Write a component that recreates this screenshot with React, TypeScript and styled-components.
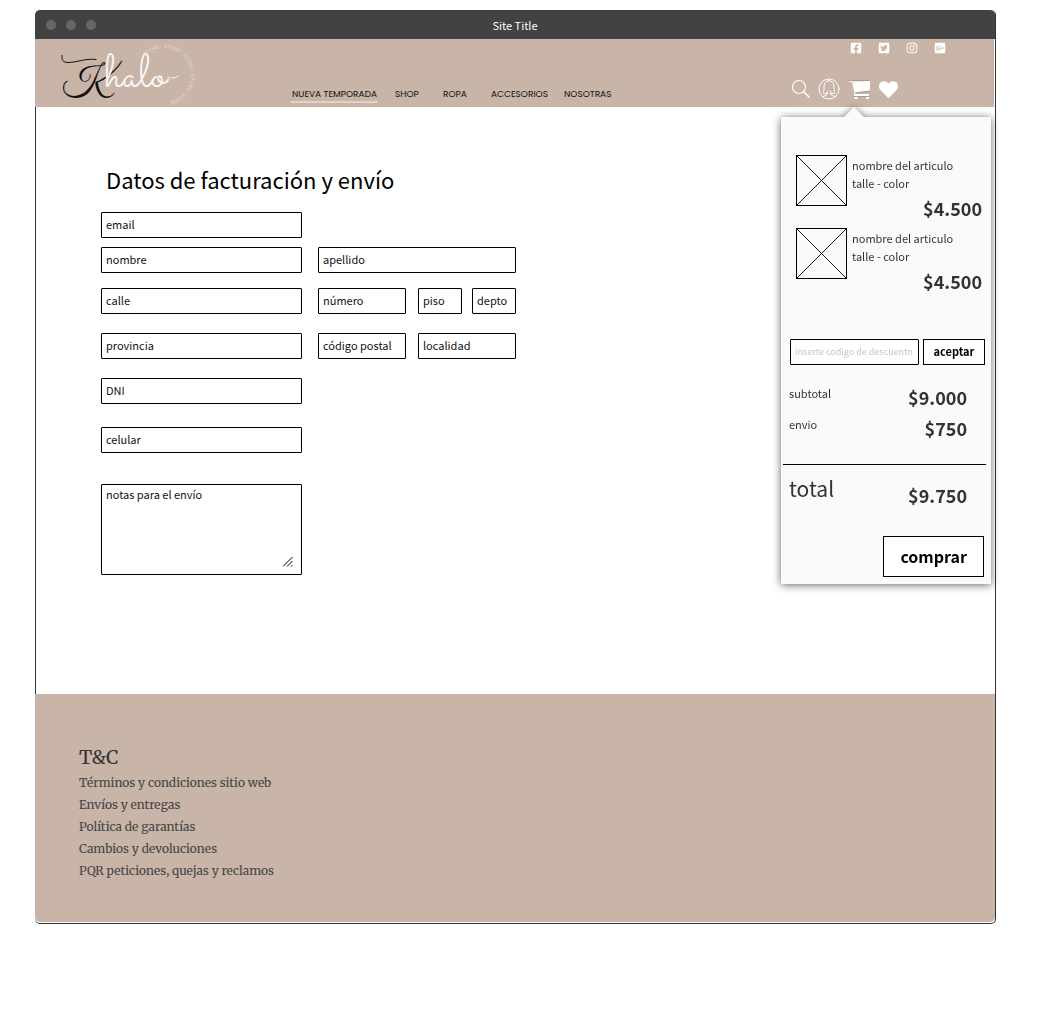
import React from "react";
import styled, { createGlobalStyle } from "styled-components";
import {
  FaFacebookSquare,
  FaTwitterSquare,
  FaInstagram,
  FaGooglePlusSquare,
  FaHeart,
} from "react-icons/fa";

const sans = `"Noto Sans CJK SC", "Noto Sans", sans-serif`;
const serif = `"Merriweather", "DejaVu Serif Condensed", "DejaVu Serif", serif`;
const script = `"Great Vibes", "Liberation Serif", serif`;
const thinScript = `"Sacramento", "Allura", "Great Vibes", "Liberation Serif", serif`;
const sand = "#c8b5a8";
const ink = "#333333";

const GlobalStyle = createGlobalStyle`
  *, *::before, *::after { box-sizing: border-box; }
  body { margin: 0; background: #fff; font-family: ${sans}; color: #000; }
  h1, h2, p, ul, dl, dd { margin: 0; padding: 0; }
  ul { list-style: none; }
  button, input, textarea { font-family: inherit; }
`;

const Page = styled.div`
  padding: 10px 64px 99px 35px;
`;

const Frame = styled.div`
  border-right: 1px solid ${ink};
  border-bottom: 1px solid ${ink};
  border-radius: 5px;
`;

const TitleBar = styled.div`
  display: grid;
  grid-template-columns: 1fr auto 1fr;
  align-items: center;
  height: 29px;
  padding: 0 11px;
  border-radius: 5px 5px 0 0;
  background: #424242;
  color: #fff;
  font-size: 11px;
  line-height: 18px;
`;

const Dots = styled.div`
  display: flex;
  gap: 10px;
`;

const Dot = styled.span`
  width: 10px;
  height: 10px;
  border-radius: 50%;
  background: #666;
`;

const Header = styled.header`
  position: relative;
  display: grid;
  grid-template-columns: 256px 1fr 203px;
  height: 68px;
  margin-right: 1px;
  background: ${sand};
`;

const LogoLink = styled.a`
  display: block;
  padding-left: 20px;
  svg { display: block; }
`;

const Nav = styled.nav`
  display: grid;
  grid-template-columns: 103px 48px 48px 73px auto;
  justify-content: start;
  align-self: end;
  padding-bottom: 4px;
`;

const NavLink = styled.a<{ $active?: boolean }>`
  justify-self: start;
  padding: 1px 1px 0;
  border-bottom: 2px solid ${(p) => (p.$active ? "#ded2ca" : "transparent")};
  color: #111;
  font-family: "Poppins", Inter, sans-serif;
  font-size: 9px;
  line-height: 14px;
  text-decoration: none;
  white-space: nowrap;
`;

const Tools = styled.div`
  display: flex;
  flex-direction: column;
  justify-content: space-between;
  padding: 3px 0 7px;
`;

const Social = styled.div`
  display: flex;
  gap: 16px;
  padding-left: 59px;
`;

const Actions = styled.div`
  display: flex;
  align-items: center;
  gap: 8px;
`;

const IconLink = styled.a`
  display: flex;
  color: #fff;
`;

const IconButton = styled.button`
  display: flex;
  padding: 0;
  border: 0;
  background: none;
  color: #fff;
  cursor: pointer;
`;

const Main = styled.main`
  padding: 54px 16px 119px 65px;
  border-left: 1px solid ${ink};
`;

const Heading = styled.h1`
  margin-bottom: 15px;
  padding-left: 5px;
  font-size: 22px;
  font-weight: 400;
  line-height: 36px;
`;

const Form = styled.form`
  max-width: 415px;
`;

const Row = styled.div<{ $gap?: number }>`
  display: grid;
  grid-template-columns: 201fr 198fr;
  column-gap: 16px;
  margin-top: ${(p) => p.$gap ?? 0}px;
`;

const Split = styled.div`
  display: grid;
  grid-template-columns: 88fr 98fr;
  gap: 12px;
`;

const Pair = styled.div`
  display: grid;
  grid-template-columns: 1fr 1fr;
  gap: 10px;
`;

const Field = styled.input`
  width: 100%;
  min-width: 0;
  height: 26px;
  padding: 0 4px 2px;
  border: 1px solid #000;
  border-radius: 1px;
  background: #fff;
  color: #000;
  font-size: 11px;
  line-height: 18px;
  &::placeholder { color: #111; opacity: 1; }
`;

const NotesBox = styled.div`
  position: relative;
  display: flex;
`;

const Notes = styled.textarea`
  width: 100%;
  height: 91px;
  padding: 0 4px;
  border: 1px solid #000;
  border-radius: 1px;
  font-size: 11px;
  line-height: 18px;
  resize: none;
  &::placeholder { color: #111; opacity: 1; }
`;

const Grip = styled.svg`
  position: absolute;
  right: 9px;
  bottom: 8px;
  pointer-events: none;
`;

const Cart = styled.aside`
  position: absolute;
  z-index: 1;
  top: calc(100% + 10px);
  right: 3px;
  width: 210px;
  padding: 38px 0 7px;
  background: #fafafa;
  color: ${ink};
  filter: drop-shadow(0 1px 4px rgba(0, 0, 0, 0.6));
  &::before {
    content: "";
    position: absolute;
    bottom: 100%;
    left: 63px;
    border: 10px solid transparent;
    border-top-width: 0;
    border-bottom-color: #fafafa;
  }
`;

const Items = styled.ul`
  display: grid;
  gap: 3px;
  padding: 0 9px 0 15px;
`;

const Item = styled.li`
  display: grid;
  grid-template-columns: 51px 1fr;
  column-gap: 5px;
  font-size: 11px;
  line-height: 18px;
`;

const Thumb = styled.svg`
  display: block;
`;

const ItemText = styled.div`
  padding: 1px 0;
`;

const ItemPrice = styled.p`
  font-size: 18px;
  font-weight: 700;
  line-height: 32px;
  text-align: right;
`;

const Discount = styled.form`
  display: grid;
  grid-template-columns: 129fr 62fr;
  gap: 4px;
  margin-top: 41px;
  padding: 0 6px 0 9px;
`;

const DiscountField = styled(Field)`
  font-size: 9px;
  &::placeholder { color: #c4c4c4; }
`;

const Button = styled.button<{ $large?: boolean }>`
  height: ${(p) => (p.$large ? 41 : 26)}px;
  padding: 0 ${(p) => (p.$large ? 16 : 0)}px 2px;
  border: 1px solid #000;
  background: #fff;
  color: #000;
  font-size: ${(p) => (p.$large ? 16 : 11)}px;
  font-weight: 700;
  cursor: pointer;
`;

const Summary = styled.dl`
  margin-top: 17px;
  padding: 0 24px 0 8px;
`;

const SummaryRow = styled.div`
  display: flex;
  justify-content: space-between;
  align-items: flex-start;
`;

const Label = styled.dt<{ $total?: boolean }>`
  font-size: ${(p) => (p.$total ? 21 : 11)}px;
  line-height: ${(p) => (p.$total ? 30 : 22)}px;
`;

const Amount = styled.dd<{ $total?: boolean }>`
  font-size: 18px;
  font-weight: 700;
  line-height: ${(p) => (p.$total ? 44 : 31)}px;
`;

const Rule = styled.hr`
  height: 1px;
  margin: 20px 5px 8px 2px;
  border: 0;
  background: #000;
`;

const TotalBlock = styled(Summary)`
  margin-top: 0;
`;

const BuyRow = styled.div`
  display: flex;
  justify-content: flex-end;
  margin-top: 19px;
  padding-right: 7px;
`;

const Footer = styled.footer`
  margin-bottom: 1px;
  padding: 49px 44px 40px;
  border-radius: 0 0 5px 5px;
  background: ${sand};
  font-family: ${serif};
`;

const FooterTitle = styled.h2`
  color: ${ink};
  font-size: 19px;
  font-weight: 400;
  line-height: 29px;
`;

const FooterLink = styled.a`
  display: block;
  width: fit-content;
  color: #444;
  font-size: 12px;
  line-height: 22px;
  text-decoration: none;
`;

function Logo() {
  return (
    <svg width="142" height="68" viewBox="55 39 142 68" role="img" aria-label="Khalo Store">
      <defs>
        <path id="ring" d="M145 55.5 A27 27 0 1 1 145 94.5" />
      </defs>
      <path
        d="M62 55.500C61.500 60 63 62.500 68 62.500C77 62.500 86 58 96 59.500"
        fill="none"
        stroke="#111"
        strokeLinecap="round"
      />
      <text x="62" y="91" fontFamily={script} fontSize="36" fill="#111">
        K<tspan x="105" y="86" fontFamily={thinScript} fontSize="48" fill="#fbf8f6">halo</tspan>
      </text>
      <path d="M168 77C172 79 175 78 178.500 76" fill="none" stroke="#fbf8f6" strokeLinecap="round" />
      <text fontFamily="Inter, sans-serif" fontSize="5" fill="#e6dad2">
        <textPath href="#ring">STORE · STORE · STORE · STORE · STORE</textPath>
      </text>
    </svg>
  );
}

function SearchIcon() {
  return (
    <svg width="19" height="22" viewBox="0 0 19 22" fill="none" stroke="#fff" strokeLinecap="round">
      <circle cx="8" cy="9" r="6.500" strokeWidth="1.100" />
      <path d="M13 14l5 5" strokeWidth="1.700" />
    </svg>
  );
}

function ProfileIcon() {
  return (
    <svg width="22" height="22" viewBox="0 0 22 22" fill="none" stroke="#fff" strokeLinejoin="round" strokeLinecap="round">
      <circle cx="11" cy="11" r="10" />
      <path d="M9 15.500H6.200c-1.200 0-1-1-.6-2C6.400 12 6 10.500 6 8.500C6 5 8 2.800 11 2.800s5 2.200 5 5.700c0 2 0 3.500.4 5c.4 1 .6 2-.6 2H13" />
      <path d="M9.300 13v3c0 1.500-3 1.500-4.300 2.800M12.700 13v3c0 1.500 3 1.500 4.300 2.800" />
    </svg>
  );
}

function CartIcon() {
  return (
    <svg width="23" height="22" viewBox="0 0 23 22" fill="none">
      <path d="M5 3.500l17-.5v9.500L7 14.500z" fill="#fff" />
      <path d="M1 3.500h3.500L7.500 17" stroke="#fff" strokeWidth="1.200" />
      <path d="M6 17h15M6.500 20h3M18 20h3" stroke="#fff" strokeWidth="1.800" />
      <path d="M.5 2.500H21.500M7 15l15-2M6 18.500h15" stroke="#9d918b" strokeWidth=".7" />
    </svg>
  );
}

function CrossedThumb() {
  return (
    <Thumb width="51" height="51" viewBox="0 0 51 51" fill="none" stroke="#000" role="img" aria-label="imagen del articulo">
      <rect x=".5" y=".5" width="50" height="50" />
      <path d="M.5.500l50 50M50.500.500l-50 50" strokeWidth=".9" />
    </Thumb>
  );
}

const navItems = ["NUEVA TEMPORADA", "SHOP", "ROPA", "ACCESORIOS", "NOSOTRAS"];

const socials = [
  { name: "Facebook", Icon: FaFacebookSquare },
  { name: "Twitter", Icon: FaTwitterSquare },
  { name: "Instagram", Icon: FaInstagram },
  { name: "Google+", Icon: FaGooglePlusSquare },
];

const cartItems = [
  { id: 1, name: "nombre del articulo", detail: "talle - color", price: "$4.500" },
  { id: 2, name: "nombre del articulo", detail: "talle - color", price: "$4.500" },
];

const footerLinks = [
  "Términos y condiciones sitio web",
  "Envíos y entregas",
  "Política de garantías",
  "Cambios y devoluciones",
  "PQR peticiones, quejas y reclamos",
];

function TextField({ name }: { name: string }) {
  return <Field type="text" name={name} placeholder={name} aria-label={name} />;
}

function CartPanel() {
  return (
    <Cart aria-label="carrito">
      <Items>
        {cartItems.map((item) => (
          <Item key={item.id}>
            <CrossedThumb />
            <ItemText>
              <p>{item.name}</p>
              <p>{item.detail}</p>
              <ItemPrice>{item.price}</ItemPrice>
            </ItemText>
          </Item>
        ))}
      </Items>
      <Discount onSubmit={(e) => e.preventDefault()}>
        <DiscountField
          type="text"
          placeholder="inserte codigo de descuento"
          aria-label="codigo de descuento"
        />
        <Button type="submit">aceptar</Button>
      </Discount>
      <Summary>
        <SummaryRow>
          <Label>subtotal</Label>
          <Amount>$9.000</Amount>
        </SummaryRow>
        <SummaryRow>
          <Label>envio</Label>
          <Amount>$750</Amount>
        </SummaryRow>
      </Summary>
      <Rule />
      <TotalBlock>
        <SummaryRow>
          <Label $total>total</Label>
          <Amount $total>$9.750</Amount>
        </SummaryRow>
      </TotalBlock>
      <BuyRow>
        <Button type="button" $large>comprar</Button>
      </BuyRow>
    </Cart>
  );
}

export default function App() {
  return (
    <>
      <GlobalStyle />
      <Page>
        <Frame>
          <TitleBar>
            <Dots>
              <Dot />
              <Dot />
              <Dot />
            </Dots>
            <span>Site Title</span>
          </TitleBar>
          <Header>
            <LogoLink href="#">
              <Logo />
            </LogoLink>
            <Nav>
              {navItems.map((label, i) => (
                <NavLink key={label} href="#" $active={i === 0}>{label}</NavLink>
              ))}
            </Nav>
            <Tools>
              <Social>
                {socials.map(({ name, Icon }) => (
                  <IconLink key={name} href="#" aria-label={name}>
                    <Icon size={12} />
                  </IconLink>
                ))}
              </Social>
              <Actions>
                <IconButton type="button" aria-label="buscar"><SearchIcon /></IconButton>
                <IconButton type="button" aria-label="mi cuenta"><ProfileIcon /></IconButton>
                <IconButton type="button" aria-label="carrito"><CartIcon /></IconButton>
                <IconButton type="button" aria-label="favoritos"><FaHeart size={19} /></IconButton>
              </Actions>
            </Tools>
            <CartPanel />
          </Header>
          <Main>
            <Heading>Datos de facturación y envío</Heading>
            <Form>
              <Row>
                <TextField name="email" />
              </Row>
              <Row $gap={9}>
                <TextField name="nombre" />
                <TextField name="apellido" />
              </Row>
              <Row $gap={15}>
                <TextField name="calle" />
                <Split>
                  <TextField name="número" />
                  <Pair>
                    <TextField name="piso" />
                    <TextField name="depto" />
                  </Pair>
                </Split>
              </Row>
              <Row $gap={19}>
                <TextField name="provincia" />
                <Split>
                  <TextField name="código postal" />
                  <TextField name="localidad" />
                </Split>
              </Row>
              <Row $gap={19}>
                <TextField name="DNI" />
              </Row>
              <Row $gap={23}>
                <TextField name="celular" />
              </Row>
              <Row $gap={31}>
                <NotesBox>
                  <Notes name="notas" placeholder="notas para el envío" aria-label="notas para el envío" />
                  <Grip width="10" height="10" viewBox="0 0 10 10" stroke="#000" fill="none">
                    <path d="M0 9.500L9.500 0M4 9.500L9.500 4M8 9.500L9.500 8" />
                  </Grip>
                </NotesBox>
              </Row>
            </Form>
          </Main>
          <Footer>
            <FooterTitle>T&amp;C</FooterTitle>
            <ul>
              {footerLinks.map((label) => (
                <li key={label}>
                  <FooterLink href="#">{label}</FooterLink>
                </li>
              ))}
            </ul>
          </Footer>
        </Frame>
      </Page>
    </>
  );
}
